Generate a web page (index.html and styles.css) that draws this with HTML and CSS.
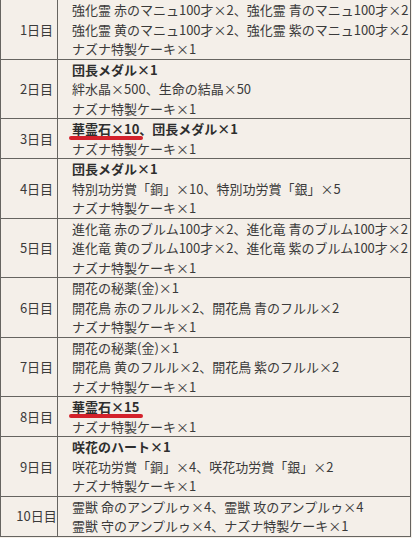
FILE: index.html
```html
<!DOCTYPE html>
<html lang="ja">
<head>
<meta charset="utf-8">
<link rel="stylesheet" href="styles.css">
</head>
<body>
<table class="rewards">
  <colgroup><col class="c-day"><col class="c-items"></colgroup>
  <tbody>
    <tr><td class="day">1日目</td><td class="items">強化霊 赤のマニュ100才×2、強化霊 青のマニュ100才×2<br>強化霊 黄のマニュ100才×2、強化霊 紫のマニュ100才×2<br>ナズナ特製ケーキ×1</td></tr>
    <tr><td class="day">2日目</td><td class="items"><b>団長メダル×1</b><br>絆水晶×500、生命の結晶×50<br>ナズナ特製ケーキ×1</td></tr>
    <tr><td class="day">3日目</td><td class="items"><b><span class="mark">華霊石×10</span>、団長メダル×1</b><br>ナズナ特製ケーキ×1</td></tr>
    <tr><td class="day">4日目</td><td class="items"><b>団長メダル×1</b><br>特別功労賞「銅」×10、特別功労賞「銀」×5<br>ナズナ特製ケーキ×1</td></tr>
    <tr><td class="day">5日目</td><td class="items">進化竜 赤のブルム100才×2、進化竜 青のブルム100才×2<br>進化竜 黄のブルム100才×2、進化竜 紫のブルム100才×2<br>ナズナ特製ケーキ×1</td></tr>
    <tr><td class="day">6日目</td><td class="items">開花の秘薬(金)×1<br>開花鳥 赤のフルル×2、開花鳥 青のフルル×2<br>ナズナ特製ケーキ×1</td></tr>
    <tr><td class="day">7日目</td><td class="items">開花の秘薬(金)×1<br>開花鳥 黄のフルル×2、開花鳥 紫のフルル×2<br>ナズナ特製ケーキ×1</td></tr>
    <tr><td class="day">8日目</td><td class="items"><b><span class="mark">華霊石×15</span></b><br>ナズナ特製ケーキ×1</td></tr>
    <tr><td class="day">9日目</td><td class="items"><b>咲花のハート×1</b><br>咲花功労賞「銅」×4、咲花功労賞「銀」×2<br>ナズナ特製ケーキ×1</td></tr>
    <tr><td class="day">10日目</td><td class="items">霊獣 命のアンプルゥ×4、霊獣 攻のアンプルゥ×4<br>霊獣 守のアンプルゥ×4、ナズナ特製ケーキ×1</td></tr>
  </tbody>
</table>
</body>
</html>
```
FILE: styles.css
```css
html, body {
  margin: 0;
  padding: 0;
  background: #f4efe9;
}
body {
  overflow: hidden;
}
.rewards {
  width: 411px;
  margin-top: -1px;
  border-collapse: collapse;
  table-layout: fixed;
  background: #f4efe9;
  color: #3a3a3a;
  font-family: "Noto Sans CJK JP", "Noto Sans", sans-serif;
  font-size: 13px;
  line-height: 19.5px;
}
.c-day { width: 57px; }
.rewards td {
  border: 1px solid #666460;
  padding: 0 0 0 14px;
  white-space: nowrap;
  overflow: hidden;
  vertical-align: middle;
}
.rewards td.day {
  text-align: center;
  padding-left: 15px;
  padding-right: 0;
}
.rewards b {
  font-weight: bold;
  color: #2e2e2e;
}
.mark {
  position: relative;
}
.mark::after {
  content: "";
  position: absolute;
  left: -3px;
  right: -4px;
  bottom: -2px;
  height: 4px;
  border-radius: 2px;
  background: #d3212b;
}
```
